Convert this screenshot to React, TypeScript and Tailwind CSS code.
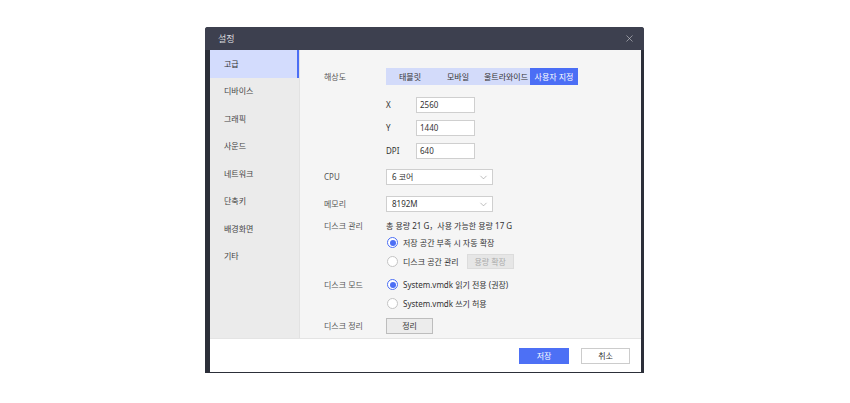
import { ChevronDown, X } from 'lucide-react'

const FONT = { fontFamily: '"Noto Sans", "Noto Sans CJK KR", sans-serif' }

const MENU = ['고급', '디바이스', '그래픽', '사운드', '네트워크', '단축키', '배경화면', '기타']
const TABS = ['태블릿', '모바일', '울트라와이드', '사용자 지정']

function Radio({ checked, label }: { checked?: boolean; label: string }) {
  return (
    <div className="flex items-center gap-[5px]">
      <span
        className={`flex h-[11px] w-[11px] items-center justify-center rounded-full border ${
          checked ? 'border-[#4b6ef5] bg-white' : 'border-[#c4c4c4] bg-white'
        }`}
      >
        {checked && <span className="h-[6px] w-[6px] rounded-full bg-[#4b6ef5]" />}
      </span>
      <span className="text-[#333]">{label}</span>
    </div>
  )
}

function Field({ label, value }: { label: string; value: string }) {
  return (
    <div className="flex items-center">
      <span className="w-[30px] text-[#333]">{label}</span>
      <div className="flex h-[16px] w-[59px] items-center border border-[#cfcfcf] bg-white px-[3px] text-[#333]">
        {value}
      </div>
    </div>
  )
}

function Select({ value }: { value: string }) {
  return (
    <div className="flex h-[16px] w-[107px] items-center justify-between border border-[#cfcfcf] bg-white pl-[5px] pr-[3px] text-[#333]">
      <span>{value}</span>
      <ChevronDown size={11} strokeWidth={1.2} className="text-[#888]" />
    </div>
  )
}

export default function App() {
  return (
    <div className="h-[403px] w-[850px] bg-white pl-[205px] pt-[27px] text-[8px] leading-none" style={FONT}>
      <div className="flex w-[439px] flex-col rounded-t-[3px] bg-[#2c2f39] pb-[1px] pl-[5px] pr-[3px]">
        {/* title bar */}
        <div className="-ml-[5px] -mr-[3px] flex h-[23px] items-center justify-between rounded-t-[3px] bg-[#3d404f] pl-[13px] pr-[9px]">
          <span className="text-[9px] text-[#d8d9de]">설정</span>
          <X size={11} strokeWidth={1.3} className="text-[#c9cad0]" />
        </div>

        {/* body */}
        <div className="flex h-[288px]">
          <div className="flex w-[89px] flex-col bg-[#ebebeb]">
            {MENU.map((m, i) => (
              <div
                key={m}
                className={`flex h-[27.5px] items-center pl-[14px] ${
                  i === 0 ? 'border-r-2 border-[#4b6ef5] bg-[#d3dcfd] text-[#333]' : 'text-[#444]'
                }`}
              >
                {m}
              </div>
            ))}
          </div>

          <div className="flex flex-1 flex-col border-l border-[#e2e2e2] bg-[#f5f5f5] pl-[24px] pt-[18px] text-[#555]">
            {/* resolution */}
            <div className="flex h-[17px] items-center">
              <span className="w-[62px]">해상도</span>
              <div className="flex h-[17px] bg-[#d3dbfa]">
                {TABS.map((t, i) => (
                  <div
                    key={t}
                    className={`flex w-[48px] items-center justify-center ${
                      i === 3 ? 'bg-[#4b6ef5] text-white' : 'text-[#333]'
                    }`}
                  >
                    {t}
                  </div>
                ))}
              </div>
            </div>

            <div className="ml-[62px] mt-[12px] flex flex-col gap-[7px]">
              <Field label="X" value="2560" />
              <Field label="Y" value="1440" />
              <Field label="DPI" value="640" />
            </div>

            <div className="mt-[10px] flex items-center">
              <span className="w-[62px]">CPU</span>
              <Select value="6 코어" />
            </div>

            <div className="mt-[11px] flex items-center">
              <span className="w-[62px]">메모리</span>
              <Select value="8192M" />
            </div>

            <div className="mt-[10px] flex">
              <span className="w-[62px]">디스크 관리</span>
              <div className="flex flex-col">
                <span className="text-[#333]">총 용량 21 G，사용 가능한 용량 17 G</span>
                <div className="ml-[1px] mt-[7px]">
                  <Radio checked label="저장 공간 부족 시 자동 확장" />
                </div>
                <div className="ml-[1px] mt-[6px] flex items-center gap-[8px]">
                  <Radio label="디스크 공간 관리" />
                  <div className="flex h-[15px] w-[47px] items-center justify-center border border-[#dcdcdc] bg-[#e6e6e6] text-[#aaa]">
                    용량 확장
                  </div>
                </div>
              </div>
            </div>

            <div className="mt-[10px] flex">
              <span className="w-[62px] pt-[2px]">디스크 모드</span>
              <div className="ml-[1px] flex flex-col gap-[8px]">
                <Radio checked label="System.vmdk 읽기 전용 (권장)" />
                <Radio label="System.vmdk 쓰기 허용" />
              </div>
            </div>

            <div className="mt-[9px] flex items-center">
              <span className="w-[62px]">디스크 정리</span>
              <div className="flex h-[16px] w-[47px] items-center justify-center border border-[#bdbdbd] bg-[#ececec] text-[#333]">
                정리
              </div>
            </div>
          </div>
        </div>

        {/* footer */}
        <div className="flex h-[34px] items-center justify-end gap-[12px] border-t border-[#e4e4e4] bg-white pr-[11px]">
          <div className="flex h-[16px] w-[50px] items-center justify-center bg-[#4d70f5] text-white">저장</div>
          <div className="flex h-[16px] w-[49px] items-center justify-center border border-[#cccccc] bg-white text-[#333]">
            취소
          </div>
        </div>
      </div>
    </div>
  )
}
